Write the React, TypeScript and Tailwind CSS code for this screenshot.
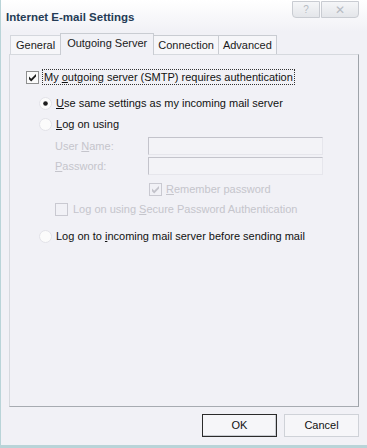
import type { ReactNode } from "react";

function CheckBox({ checked, disabled }: { checked?: boolean; disabled?: boolean }) {
  const stroke = disabled ? "#c9c9d1" : "#8e8f8f";
  return (
    <svg width="13" height="13" viewBox="0 0 13 13" className="shrink-0">
      <rect x="0.5" y="0.5" width="12" height="12" fill={disabled ? "#f1f1f6" : "#fafafa"} stroke={stroke} />
      {checked ? <path d="M3 5.5 L5.2 7.7 L10 2.9 L10 5.6 L5.2 10.4 L3 8.2 Z" fill={disabled ? "#c3c3cb" : "#1c1c1c"} /> : null}
    </svg>
  );
}

function Radio({ checked }: { checked?: boolean }) {
  return (
    <svg width="13" height="13" viewBox="0 0 13 13" className="shrink-0">
      <circle cx="6.5" cy="6.5" r="6" fill="#fbfbfb" stroke="#e2e2e8" />
      {checked ? <circle cx="6.5" cy="6.5" r="2.3" fill="#1d1d1d" /> : null}
    </svg>
  );
}

function Field({ label }: { label: ReactNode }) {
  return (
    <div className="flex items-center h-[20px]">
      <span className="w-[93px] text-[#c5c5cc]">{label}</span>
      <div className="w-[175px] h-[18px] border border-[#c3c3cb] border-b-[#e6e6ec] border-r-[#e6e6ec] bg-[#f3f3f7]" />
    </div>
  );
}

export default function App() {
  return (
    <div
      className="relative w-[367px] h-[448px] bg-[#f1f1f6] text-[11px] text-[#111] border-l border-b-[3px] border-[#b9d4d8] overflow-hidden"
      style={{ fontFamily: "Tahoma, 'Liberation Sans', Arial, sans-serif" }}
    >
      {/* title bar */}
      <div className="h-[32px] flex items-start justify-between pl-[5px] pr-[8px] bg-gradient-to-b from-[#ffffff] to-[#f1f1f6]">
        <span className="mt-[9px] font-bold text-[11.5px] text-[#243b55]">Internet E-mail Settings</span>
        <div className="mt-[1px] flex gap-[1px]">
          <div className="w-[28px] h-[17px] flex items-center justify-center border border-[#c9ccd2] rounded-bl-[4px] bg-gradient-to-b from-[#f5f6f8] to-[#e4e6ea] text-[#b7bcc3] text-[10px]">?</div>
          <div className="w-[38px] h-[17px] flex items-center justify-center border border-[#c9ccd2] rounded-br-[4px] bg-gradient-to-b from-[#f5f6f8] to-[#e4e6ea] text-[#b7bcc3] text-[12px]">✕</div>
        </div>
      </div>

      {/* tabs */}
      <div className="ml-[9px] h-[22px] flex items-end">
        <div className="h-[19px] px-[5px] flex items-center border-t border-l border-[#d4d7dd] bg-[#f6f6f9] text-[#1a1a1a]">General</div>
        <div className="h-[22px] px-[6px] -mb-[1px] relative z-10 flex items-center pb-[2px] border-t border-l border-r border-[#c9ccd2] bg-[#f1f1f6] text-[#1a1a1a]">
          Outgoing Server
        </div>
        <div className="h-[19px] px-[4px] flex items-center border-t border-r border-[#c9ccd2] bg-[#f6f6f9] text-[#1a1a1a]">Connection</div>
        <div className="h-[19px] px-[4px] flex items-center border-t border-r border-[#c9ccd2] bg-[#f6f6f9] text-[#1a1a1a]">Advanced</div>
      </div>

      {/* panel */}
      <div className="mx-[8px] h-[353px] border border-[#d6d9de] border-r-[#9ea3a9] border-b-[#a7abb1] pt-[14px]">
        <div className="flex items-center gap-[3px] pl-[16px]">
          <CheckBox checked />
          <span className="border border-dotted border-[#333] px-[1px] leading-[14px]">
            My <u>o</u>utgoing server (SMTP) requires authentication
          </span>
        </div>

        <div className="pl-[29px] mt-[8px] flex flex-col">
          <div className="flex items-center gap-[4px] h-[21px]">
            <Radio checked />
            <span>
              <u>U</u>se same settings as my incoming mail server
            </span>
          </div>
          <div className="flex items-center gap-[4px] h-[21px]">
            <Radio />
            <span>
              <u>L</u>og on using
            </span>
          </div>
        </div>

        <div className="pl-[45px] mt-[1px] flex flex-col">
          <Field label={<>User <u>N</u>ame:</>} />
          <Field label={<><u>P</u>assword:</>} />
          <div className="flex items-center gap-[4px] h-[20px] mt-[3px] pl-[94px] text-[#c5c5cc]">
            <CheckBox checked disabled />
            <span>
              <u>R</u>emember password
            </span>
          </div>
          <div className="flex items-center gap-[5px] h-[21px] text-[#c5c5cc]">
            <CheckBox disabled />
            <span>
              Log on using <u>S</u>ecure Password Authentication
            </span>
          </div>
        </div>

        <div className="pl-[29px] mt-[6px] flex items-center gap-[4px] h-[21px]">
          <Radio />
          <span>
            Log on to <u>i</u>ncoming mail server before sending mail
          </span>
        </div>
      </div>

      {/* buttons */}
      <div className="flex justify-end gap-[7px] pr-[8px] mt-[7px]">
        <button className="w-[75px] h-[23px] border border-[#2b2b2b] bg-[#f6f6f9] text-[#111] shadow-[inset_-1px_-1px_0_#c9ccd2]">OK</button>
        <button className="w-[75px] h-[23px] border border-[#cfd2d8] bg-[#f6f6f9] text-[#111]">Cancel</button>
      </div>
    </div>
  );
}
